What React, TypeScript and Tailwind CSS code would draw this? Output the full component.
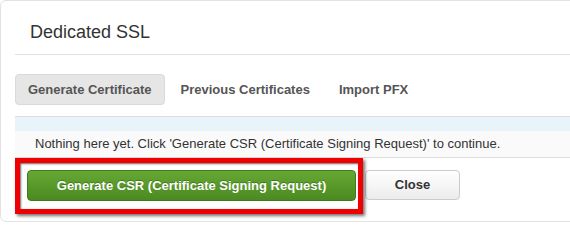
import React from "react";

export default function App() {
  return (
    <div className="w-[570px] h-[224px] bg-white overflow-hidden relative font-['Liberation_Sans',Arial,sans-serif]">
      {/* Modal shell */}
      <div className="w-[600px] h-[222px] rounded-[6px] border border-[#e2e2e2] bg-white pl-[14px] relative">
        {/* Header */}
        <div className="h-[54px] border-b border-[#e0e0e0] pl-[15px] pt-[20px]">
          <h3 className="text-[18px] leading-[22px] text-[#333]">Dedicated SSL</h3>
        </div>

        {/* Tabs */}
        <div className="mt-[19px] flex gap-[3px] text-[13px] font-bold text-[#555]">
          <div className="h-[31px] px-[12px] flex items-center rounded-[4px] border border-[#d9d9d9] bg-[#e6e6e6]">
            Generate Certificate
          </div>
          <div className="h-[31px] px-[12px] flex items-center border border-transparent">
            Previous Certificates
          </div>
          <div className="h-[31px] px-[12px] flex items-center border border-transparent">
            Import PFX
          </div>
        </div>

        {/* Table */}
        <div className="mt-[11px] border-t border-[#dddddd]">
          <div className="h-[14px] bg-[#e8f3fa]" />
          <div className="h-[27px] bg-[#fafafa] border-b border-[#dddddd] pl-[20px] flex items-center text-[13px] text-[#333]">
            Nothing here yet. Click 'Generate CSR (Certificate Signing Request)' to continue.
          </div>
        </div>

        {/* Footer */}
        <div className="pl-[12px] pt-[12px] flex gap-[9px]">
          <button className="w-[329px] h-[31px] rounded-[4px] border border-[#3f7a1b] bg-gradient-to-b from-[#66a834] to-[#4b8a20] text-white text-[13px] font-bold [text-shadow:0_-1px_0_rgba(0,0,0,0.25)]">
            Generate CSR (Certificate Signing Request)
          </button>
          <button className="w-[95px] h-[30px] rounded-[4px] border border-[#cccccc] bg-gradient-to-b from-white to-[#ececec] text-[#333] text-[13px] font-bold">
            Close
          </button>
        </div>

        {/* Annotation highlight */}
        <div className="absolute left-[14px] top-[157px] w-[348px] h-[56px] border-[5px] border-[#f00000] shadow-[2px_2px_3px_rgba(0,0,0,0.55),inset_1px_1px_2px_rgba(0,0,0,0.6)] pointer-events-none" />
      </div>
    </div>
  );
}
